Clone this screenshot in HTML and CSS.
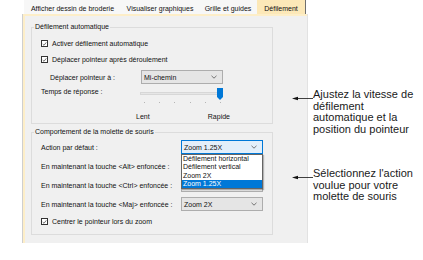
FILE: index.html
```html
<!DOCTYPE html>
<html lang="fr">
<head>
<meta charset="utf-8">
<link rel="stylesheet" href="styles.css">
</head>
<body>
<div class="page">
  <div class="dialog">
    <div class="tabs">
      <div class="tab t1 sep">Afficher dessin de broderie</div>
      <div class="tab t2 sep">Visualiser graphiques</div>
      <div class="tab t3">Grille et guides</div>
      <div class="tab t4 active">Défilement</div>
    </div>
    <div class="panel">
      <div class="group g1">
        <div class="legend">Défilement automatique</div>
        <div class="row cbrow r-cb1"><span class="cb"><svg viewBox="0 0 7 7" width="7" height="7"><path d="M1 3.6 L2.8 5.3 L6 1.2" fill="none" stroke="#222" stroke-width="0.9"/></svg></span><span>Activer défilement automatique</span></div>
        <div class="row cbrow r-cb2"><span class="cb"><svg viewBox="0 0 7 7" width="7" height="7"><path d="M1 3.6 L2.8 5.3 L6 1.2" fill="none" stroke="#222" stroke-width="0.9"/></svg></span><span>Déplacer pointeur après déroulement</span></div>
        <div class="row selrow r-move">
          <span class="lbl lbl-move">Déplacer pointeur à :</span>
          <div class="select"><span>Mi-chemin</span><svg class="chev" viewBox="0 0 6 4" width="6" height="4"><path d="M0.5 0.8 L3 3.2 L5.5 0.8" fill="none" stroke="#555" stroke-width="0.8"/></svg></div>
        </div>
        <div class="row r-slider">
          <span class="lbl lbl-g1">Temps de réponse :</span>
          <div class="slider">
            <div class="track"></div>
            <div class="thumb"></div>
            <div class="ticks"><i></i><i></i><i></i><i></i><i></i><i></i></div>
          </div>
        </div>
        <div class="row r-speed"><span>Lent</span><span>Rapide</span></div>
      </div>
      <div class="group g2">
        <div class="legend">Comportement de la molette de souris</div>
        <div class="row selrow r-action">
          <span class="lbl lbl-g2">Action par défaut :</span>
          <div class="select focus"><span>Zoom 1.25X</span><svg class="chev" viewBox="0 0 6 4" width="6" height="4"><path d="M0.5 0.8 L3 3.2 L5.5 0.8" fill="none" stroke="#555" stroke-width="0.8"/></svg>
            <ul class="list">
              <li>Défilement horizontal</li>
              <li>Défilement vertical</li>
              <li>Zoom 2X</li>
              <li class="sel">Zoom 1.25X</li>
            </ul>
          </div>
        </div>
        <div class="row selrow r-key">
          <span class="lbl lbl-g2">En maintenant la touche &lt;Alt&gt; enfoncée :</span>
          <div class="select"></div>
        </div>
        <div class="row selrow r-key">
          <span class="lbl lbl-g2">En maintenant la touche &lt;Ctrl&gt; enfoncée :</span>
          <div class="select"></div>
        </div>
        <div class="row selrow r-key">
          <span class="lbl lbl-g2">En maintenant la touche &lt;Maj&gt; enfoncée :</span>
          <div class="select"><span>Zoom 2X</span><svg class="chev" viewBox="0 0 6 4" width="6" height="4"><path d="M0.5 0.8 L3 3.2 L5.5 0.8" fill="none" stroke="#555" stroke-width="0.8"/></svg></div>
        </div>
        <div class="row cbrow r-cb3"><span class="cb"><svg viewBox="0 0 7 7" width="7" height="7"><path d="M1 3.6 L2.8 5.3 L6 1.2" fill="none" stroke="#222" stroke-width="0.9"/></svg></span><span>Centrer le pointeur lors du zoom</span></div>
      </div>
    </div>
  </div>
  <div class="notes">
    <div class="note n1">
      <svg class="arrow" viewBox="0 0 21 5" width="21" height="5"><path d="M4 2.5 H21" stroke="#111" stroke-width="0.8"/><path d="M0 2.5 L6 0.8 L6 4.2 Z" fill="#111"/></svg>
      Ajustez la vitesse de<br>défilement<br>automatique et la<br>position du pointeur
    </div>
    <div class="note n2">
      <svg class="arrow" viewBox="0 0 21 5" width="21" height="5"><path d="M4 2.5 H21" stroke="#111" stroke-width="0.8"/><path d="M0 2.5 L6 0.8 L6 4.2 Z" fill="#111"/></svg>
      Sélectionnez l'action<br>voulue pour votre<br>molette de souris
    </div>
  </div>
</div>
</body>
</html>
```

FILE: styles.css
```css
* { box-sizing: border-box; }
html, body { margin: 0; padding: 0; background: #ffffff; }
body {
  width: 423px;
  height: 260px;
  overflow: hidden;
  font-family: "Liberation Sans", Arial, sans-serif;
}
.page { display: flex; align-items: flex-start; }

.dialog {
  margin-left: 22px;
  width: 286px;
  font-size: 7px;
  color: #111;
}

.tabs {
  display: flex;
  height: 14px;
  margin-left: 2px;
}
.tab {
  height: 14px;
  padding-top: 2px;
  display: flex;
  align-items: center;
  justify-content: center;
  white-space: nowrap;
  background: #f7f7f7;
}
.tab.sep { box-shadow: inset -1px 3px 0 #f7f7f7, inset -1px 0 0 #8a8a8a; }
.t1 { width: 97px; }
.t2 { width: 78px; }
.t3 { width: 58px; }
.t4 { width: 49px; }
.tab.active {
  background: #fce8b8;
  border-right: 1px solid #6f6f6f;
}

.panel {
  height: 229px;
  background: #f0f0f0;
  border-left: 1px solid #cfcfcf;
  border-right: 1px solid #e2e2e2;
  box-shadow: inset 2px 2px 0 #fdeec8;
  padding: 13px 0 0 8px;
}

.group {
  width: 242px;
  border: 1px solid #dcdcdc;
  padding: 0 0 2px 9px;
}
.g2 { margin-top: 8px; padding-bottom: 8px; }

.legend {
  width: fit-content;
  height: 9px;
  line-height: 9px;
  margin: -6px 0 0 -7px;
  padding: 0 1px;
  background: #f0f0f0;
  white-space: nowrap;
}

.row { display: flex; align-items: center; white-space: nowrap; }
.cbrow { height: 9px; line-height: 9px; }
.selrow { height: 14px; }
.r-cb1 { margin-top: 8px; }
.r-cb2 { margin-top: 7px; }
.r-move { margin-top: 6px; }
.r-slider { margin-top: 1px; height: 20px; align-items: flex-start; }
.r-speed {
  margin: 7px 0 0 95px;
  width: 94px;
  height: 9px;
  justify-content: space-between;
}
.r-action { margin-top: 4px; }
.r-key { margin-top: 5px; }
.r-cb3 { margin-top: 6px; }

.cb {
  width: 7px;
  height: 7px;
  border: 1px solid #333;
  background: #fff;
  margin-right: 4px;
  display: flex;
  align-items: center;
  justify-content: center;
  flex: none;
}
.cb svg { width: 6px; height: 6px; }

.lbl { flex: none; }
.lbl-move { margin-left: 9px; width: 91px; }
.lbl-g1 { width: 99px; height: 14px; line-height: 14px; }
.lbl-g2 { width: 140px; }

.select {
  position: relative;
  flex: none;
  width: 82px;
  height: 14px;
  border: 1px solid #adadad;
  background: #e5e5e5;
  display: flex;
  align-items: center;
  justify-content: space-between;
  padding: 0 5px 0 2px;
}
.select.focus {
  border-color: #0078d7;
  background: #e3effa;
}
.chev { flex: none; }

.list {
  position: absolute;
  left: -1px;
  top: 13px;
  width: 82px;
  height: 35px;
  margin: 0;
  padding: 0;
  list-style: none;
  background: #fff;
  border: 1px solid #646464;
  box-shadow: 1px 1px 1px rgba(0,0,0,0.25);
  z-index: 2;
}
.list li {
  height: 8.33px;
  line-height: 8.33px;
  padding-left: 1px;
}
.list li.sel { background: #0078d7; color: #fff; }

.slider {
  position: relative;
  width: 82px;
  height: 20px;
}
.track {
  position: absolute;
  left: 0;
  top: 7px;
  width: 81px;
  height: 3px;
  background: #e6e6e6;
  border: 1px solid #d7d7d7;
}
.thumb {
  position: absolute;
  left: 77px;
  top: 3px;
  width: 6px;
  height: 12px;
  background: #0078d7;
  clip-path: polygon(0 0, 100% 0, 100% 75%, 50% 100%, 0 75%);
}
.ticks {
  position: absolute;
  left: 4px;
  top: 17px;
  width: 77px;
  height: 1px;
  display: flex;
  justify-content: space-between;
}
.ticks i { width: 1px; height: 1px; background: #b5b5b5; }

.notes {
  margin-left: 5px;
  padding-top: 89px;
  font-size: 11px;
  line-height: 11.5px;
  color: #1a1a1a;
}
.note { position: relative; white-space: nowrap; }
.n2 { margin-top: 33px; }
.arrow {
  position: absolute;
  left: -21px;
  top: 7px;
}
```
